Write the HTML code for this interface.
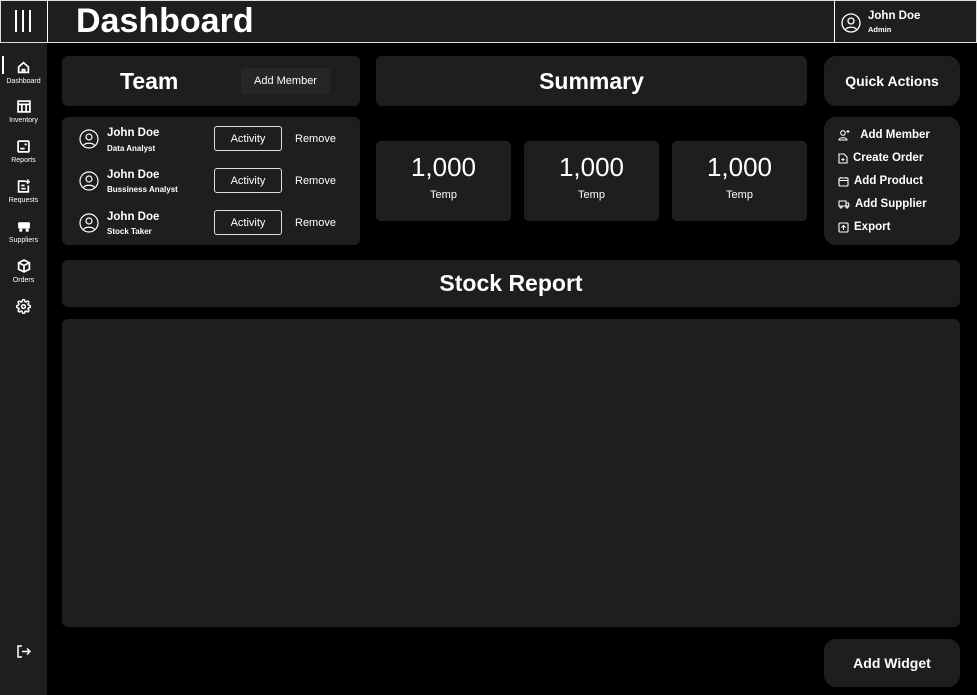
<!DOCTYPE html>
<html><head><style>
*{margin:0;padding:0;box-sizing:border-box}
body{width:977px;height:695px;background:#000;font-family:"Liberation Sans",sans-serif;color:#fff;position:relative;overflow:hidden}
.a{position:absolute}
.card{position:absolute;background:#1e1e1e;border-radius:6px}
.c{display:flex;align-items:center;justify-content:center}
.nav{position:absolute;left:0;width:47px;text-align:center;font-size:7px}
.nav svg{display:block;margin:0 auto 4px}
.btn{position:absolute;border:1px solid #ddd;border-radius:3px;width:68px;height:25px;font-size:11px;display:flex;align-items:center;justify-content:center}
.rm{position:absolute;font-size:11px}
.nm{position:absolute;font-size:11.5px;font-weight:bold}
.sub{position:absolute;font-size:8px;font-weight:bold}
.stat{position:absolute;top:141px;width:135px;height:80px;background:#1e1e1e;border-radius:5px;text-align:center}
.stat b{display:block;font-weight:normal;font-size:26px;margin-top:11px}
.stat span{font-size:11px;display:block;margin-top:6px}
.qa{position:absolute;left:838px;font-size:11.5px;font-weight:bold;display:flex;align-items:center;gap:5px}
</style></head><body>
<div class="a" style="left:0;top:0;width:977px;height:43px;background:#1e1e1e;border:1px solid #ddd"></div>
<div class="a" style="left:47px;top:0;width:1px;height:43px;background:#fff"></div>
<div class="a" style="left:834px;top:0;width:1px;height:43px;background:#fff"></div>
<div class="a" style="left:15px;top:10px;width:2px;height:22px;background:#fff"></div>
<div class="a" style="left:22px;top:10px;width:2px;height:22px;background:#fff"></div>
<div class="a" style="left:29px;top:10px;width:2px;height:22px;background:#fff"></div>
<div class="a" style="left:76px;top:2px;font-size:34px;font-weight:bold">Dashboard</div>
<svg class="a" style="left:841px;top:13px" width="20" height="20" viewBox="0 0 20 20" fill="none" stroke="#fff" stroke-width="1.3"><circle cx="10" cy="10" r="9"/><circle cx="10" cy="8" r="3"/><path d="M4.5 16.5c1.5-3 9.5-3 11 0"/></svg>
<div class="a" style="left:868px;top:10px;font-size:11.5px;font-weight:bold">John Doe</div>
<div class="a" style="left:868px;top:25px;font-size:7.5px;font-weight:bold">Admin</div>

<div class="a" style="left:0;top:43px;width:47px;height:652px;background:#1e1e1e"></div>
<div class="a" style="left:2px;top:56px;width:2px;height:18px;background:#fff"></div>
<div class="nav" style="top:61px"><svg width="13" height="13" viewBox="0 0 12 12" fill="none" stroke="#fff" stroke-width="1.6"><path d="M1.5 5.5L6 1.5l4.5 4v5h-9z"/><path d="M5 10.5V8h2v2.5"/></svg>Dashboard</div>
<div class="nav" style="top:100px"><svg width="14" height="13" viewBox="0 0 13 12" fill="none" stroke="#fff" stroke-width="1.6"><rect x="1" y="1" width="11" height="10"/><path d="M1 4h11M4.5 4v7M8.5 4v7"/></svg>Inventory</div>
<div class="nav" style="top:140px"><svg width="13" height="13" viewBox="0 0 12 12" fill="none" stroke="#fff" stroke-width="1.6"><rect x="1" y="1" width="10" height="10" rx="1"/><path d="M3 8h4M7 4h2"/></svg>Reports</div>
<div class="nav" style="top:179px"><svg width="14" height="14" viewBox="0 0 13 13" fill="none" stroke="#fff" stroke-width="1.6"><path d="M8 2H1.5v10h9V6"/><path d="M4 6h3M4 9h4M10 0.5v4M8 2.5h4"/></svg>Requests</div>
<div class="nav" style="top:220px"><svg width="14" height="13" viewBox="0 0 13 12" fill="#fff"><rect x="1" y="2" width="11" height="6" rx="1"/><circle cx="3.5" cy="9.5" r="1.5"/><circle cx="9.5" cy="9.5" r="1.5"/></svg>Suppliers</div>
<div class="nav" style="top:259px"><svg width="14" height="14" viewBox="0 0 13 13" fill="none" stroke="#fff" stroke-width="1.6"><path d="M6.5 1l5 2.5v6l-5 2.5-5-2.5v-6z M1.5 3.5l5 2.5 5-2.5M6.5 6v6"/></svg>Orders</div>
<svg class="a" style="left:16px;top:299px" width="15" height="15" viewBox="0 0 24 24" fill="none" stroke="#fff" stroke-width="2.4"><circle cx="12" cy="12" r="3"/><path d="M19.4 15a1.7 1.7 0 0 0 .3 1.8l.1.1a2 2 0 1 1-2.8 2.8l-.1-.1a1.7 1.7 0 0 0-1.8-.3 1.7 1.7 0 0 0-1 1.5V21a2 2 0 1 1-4 0v-.1a1.7 1.7 0 0 0-1.1-1.5 1.7 1.7 0 0 0-1.8.3l-.1.1a2 2 0 1 1-2.8-2.8l.1-.1a1.7 1.7 0 0 0 .3-1.8 1.7 1.7 0 0 0-1.5-1H3a2 2 0 1 1 0-4h.1a1.7 1.7 0 0 0 1.5-1.1 1.7 1.7 0 0 0-.3-1.8l-.1-.1a2 2 0 1 1 2.8-2.8l.1.1a1.7 1.7 0 0 0 1.8.3H9a1.7 1.7 0 0 0 1-1.5V3a2 2 0 1 1 4 0v.1a1.7 1.7 0 0 0 1 1.5 1.7 1.7 0 0 0 1.8-.3l.1-.1a2 2 0 1 1 2.8 2.8l-.1.1a1.7 1.7 0 0 0-.3 1.8V9a1.7 1.7 0 0 0 1.5 1H21a2 2 0 1 1 0 4h-.1a1.7 1.7 0 0 0-1.5 1z"/></svg>
<svg class="a" style="left:16px;top:644px" width="15" height="15" viewBox="0 0 15 15" fill="none" stroke="#fff" stroke-width="1.5"><path d="M6 2H2v11h4M6 7.5h8M11 4.5l3 3-3 3"/></svg>

<div class="card" style="left:62px;top:56px;width:298px;height:50px"></div>
<div class="a" style="left:120px;top:68px;font-size:23px;font-weight:bold">Team</div>
<div class="a c" style="left:241px;top:68px;width:89px;height:26px;background:#262626;border-radius:3px;font-size:11px">Add Member</div>

<div class="card" style="left:62px;top:117px;width:298px;height:128px"></div>
<svg class="a" style="left:79px;top:129px" width="20" height="20" viewBox="0 0 20 20" fill="none" stroke="#fff" stroke-width="1.2"><circle cx="10" cy="10" r="9"/><circle cx="10" cy="8" r="3"/><path d="M4.5 16.5c1.5-3 9.5-3 11 0"/></svg>
<svg class="a" style="left:79px;top:171px" width="20" height="20" viewBox="0 0 20 20" fill="none" stroke="#fff" stroke-width="1.2"><circle cx="10" cy="10" r="9"/><circle cx="10" cy="8" r="3"/><path d="M4.5 16.5c1.5-3 9.5-3 11 0"/></svg>
<svg class="a" style="left:79px;top:213px" width="20" height="20" viewBox="0 0 20 20" fill="none" stroke="#fff" stroke-width="1.2"><circle cx="10" cy="10" r="9"/><circle cx="10" cy="8" r="3"/><path d="M4.5 16.5c1.5-3 9.5-3 11 0"/></svg>
<div class="nm" style="left:107px;top:127px">John Doe</div><div class="sub" style="left:107px;top:144px">Data Analyst</div>
<div class="nm" style="left:107px;top:169px">John Doe</div><div class="sub" style="left:107px;top:185px">Bussiness Analyst</div>
<div class="nm" style="left:107px;top:211px">John Doe</div><div class="sub" style="left:107px;top:227px">Stock Taker</div>
<div class="btn" style="left:214px;top:126px">Activity</div><div class="rm" style="left:295px;top:133px">Remove</div>
<div class="btn" style="left:214px;top:168px">Activity</div><div class="rm" style="left:295px;top:175px">Remove</div>
<div class="btn" style="left:214px;top:210px">Activity</div><div class="rm" style="left:295px;top:217px">Remove</div>

<div class="card c" style="left:376px;top:56px;width:431px;height:50px;font-size:23px;font-weight:bold">Summary</div>
<div class="stat" style="left:376px"><b>1,000</b><span>Temp</span></div>
<div class="stat" style="left:524px"><b>1,000</b><span>Temp</span></div>
<div class="stat" style="left:672px"><b>1,000</b><span>Temp</span></div>

<div class="card c" style="left:824px;top:56px;width:136px;height:50px;border-radius:12px;font-size:14px;font-weight:bold">Quick Actions</div>
<div class="card" style="left:824px;top:117px;width:136px;height:128px;border-radius:12px"></div>
<div class="qa" style="top:129px"><svg width="14" height="12" viewBox="0 0 14 12" fill="none" stroke="#fff" stroke-width="1.1"><circle cx="5" cy="4" r="2.3"/><path d="M1 11c0-3 8-3 8 0zM10 1v3M8.5 2.5h3"/></svg>&nbsp;Add Member</div>
<div class="qa" style="top:152px"><svg width="10" height="11" viewBox="0 0 10 11" fill="none" stroke="#fff" stroke-width="1.1"><path d="M1 1h5l3 3v6H1z M5 5v3M3.5 6.5h3"/></svg>Create Order</div>
<div class="qa" style="top:175px"><svg width="11" height="11" viewBox="0 0 11 11" fill="none" stroke="#fff" stroke-width="1.1"><rect x="1" y="2" width="9" height="8" rx="1"/><path d="M1 4.5h9M3 2V1M8 2V1"/></svg>Add Product</div>
<div class="qa" style="top:198px"><svg width="12" height="10" viewBox="0 0 12 10" fill="none" stroke="#fff" stroke-width="1.1"><path d="M1 2h7v5H1zM8 4h2.5l.5 3H8"/><circle cx="3" cy="8" r="1"/><circle cx="9" cy="8" r="1"/></svg>Add Supplier</div>
<div class="qa" style="top:221px"><svg width="11" height="11" viewBox="0 0 11 11" fill="none" stroke="#fff" stroke-width="1.1"><rect x="1" y="1" width="9" height="9" rx="1"/><path d="M5.5 8V3.5M3.5 5.5l2-2 2 2"/></svg>Export</div>

<div class="card c" style="left:62px;top:260px;width:898px;height:47px;font-size:23px;font-weight:bold">Stock Report</div>
<div class="card" style="left:62px;top:319px;width:898px;height:308px"></div>
<div class="card c" style="left:824px;top:639px;width:136px;height:48px;border-radius:12px;font-size:14px;font-weight:bold">Add Widget</div>
</body></html>
